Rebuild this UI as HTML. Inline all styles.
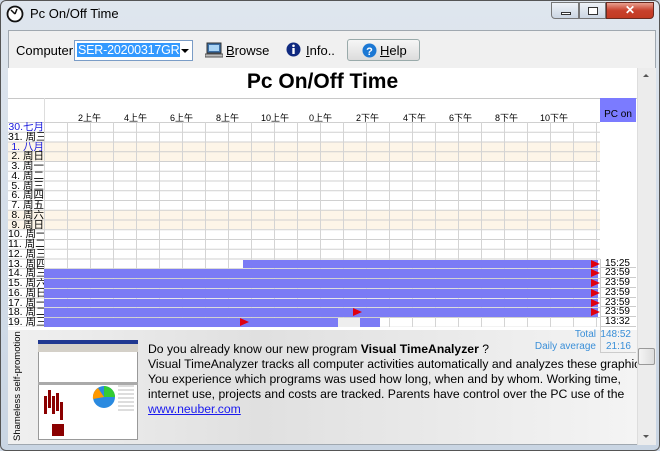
<!DOCTYPE html>
<html><head><meta charset="utf-8"><style>
*{margin:0;padding:0;box-sizing:border-box}
body{width:660px;height:451px;overflow:hidden;background:#cfd9e6;font-family:"Liberation Sans","Noto Sans CJK SC",sans-serif;position:relative}
.abs{position:absolute}
#frame{left:0;top:0;width:660px;height:451px;border:1px solid #555;border-radius:6px;background:linear-gradient(#dfe6ee,#c9d5e3)}
#title{left:30px;top:6px;font-size:13px;color:#000}
#client{left:8px;top:30px;width:648px;height:415px;background:#f0f0f0;border:1px solid #a0a8b0}
.btn{border:1px solid #9aa;border-radius:3px;background:linear-gradient(#f6f6f6,#dcdcdc);font-size:13px}
#chart{left:8px;top:68px;width:629px;height:262px;background:#fff}
.lbl{position:absolute;left:8px;width:36px;height:9.76px;font-size:10.5px;line-height:10px;text-align:right;overflow:hidden;white-space:nowrap;color:#000;font-family:"Liberation Sans","Noto Sans CJK SC",sans-serif}
.bar{position:absolute;height:8.8px;background:#7b7bf5}
.tri{position:absolute;width:0;height:0;border-top:4px solid transparent;border-bottom:4px solid transparent;border-left:9px solid #e00010}
.pc{position:absolute;left:600px;width:36px;height:9.76px;font-size:10px;line-height:10px;text-align:right;padding-right:6px;border-left:1px solid #ccc;border-bottom:1px solid #ccc;background:#fff}
.hr{position:absolute;top:111px;font-size:9px;color:#000;font-family:"Liberation Sans","Noto Sans CJK SC",sans-serif}
#ad{left:8px;top:330px;width:629px;height:114px;background:linear-gradient(90deg,#f0f0f0,#e0e0e0 40%,#f4f4f4)}
.t{position:absolute;left:148px;font-size:12.2px;white-space:nowrap;color:#000}
</style></head><body>
<div id="frame" class="abs"></div>
<svg class="abs" style="left:6px;top:5px" width="18" height="18"><circle cx="9" cy="9" r="7.5" fill="#fff" stroke="#111" stroke-width="1.8"/><path d="M9 9 L5 5 M9 9 L11 4" stroke="#111" stroke-width="1.5"/></svg>
<div id="title" class="abs">Pc On/Off Time</div>
<div class="abs" style="left:551px;top:2px;width:28px;height:17px;border:1px solid #777;border-radius:0 0 0 4px;background:linear-gradient(#eef2f7,#cbd5e2)"><div class="abs" style="left:9px;top:9px;width:10px;height:3px;border:1px solid #333;background:#fff"></div></div>
<div class="abs" style="left:579px;top:2px;width:27px;height:17px;border:1px solid #777;background:linear-gradient(#eef2f7,#cbd5e2)"><div class="abs" style="left:8px;top:4px;width:10px;height:8px;border:1px solid #333;background:#fff"></div></div>
<div class="abs" style="left:606px;top:2px;width:48px;height:17px;border:1px solid #6a2a20;border-radius:0 0 4px 0;background:linear-gradient(#e8a090,#c8402c 50%,#c23a22);color:#fff;font-size:12px;font-weight:bold;text-align:center;line-height:15px">✕</div>
<div id="client" class="abs"></div>
<div class="abs" style="left:16px;top:43px;font-size:13px">Computer</div>
<div class="abs" style="left:74px;top:40px;width:119px;height:21px;border:1px solid #7a9cc6;background:#fff"><span class="abs" style="left:2px;top:2px;background:#3399ff;color:#fff;font-size:12.5px;padding:0 1px;letter-spacing:-0.2px">SER-20200317GR</span><span class="abs" style="left:106px;top:8px;border-left:4px solid transparent;border-right:4px solid transparent;border-top:4px solid #000"></span></div>
<svg class="abs" style="left:205px;top:42px" width="18" height="16"><rect x="2" y="1" width="14" height="10" fill="#3a6ea5" stroke="#333"/><rect x="4" y="3" width="10" height="6" fill="#aad4f5"/><rect x="0" y="12" width="18" height="3" fill="#bbb" stroke="#555"/></svg>
<div class="abs" style="left:226px;top:43px;font-size:13px"><u>B</u>rowse</div>
<svg class="abs" style="left:286px;top:42px" width="15" height="15"><circle cx="7.5" cy="7.5" r="7" fill="#102a80"/><rect x="6.3" y="6" width="2.4" height="6" fill="#fff"/><circle cx="7.5" cy="3.8" r="1.3" fill="#fff"/></svg>
<div class="abs" style="left:306px;top:43px;font-size:13px"><u>I</u>nfo..</div>
<div class="abs btn" style="left:347px;top:39px;width:73px;height:22px"></div>
<svg class="abs" style="left:362px;top:43px" width="15" height="15"><circle cx="7.5" cy="7.5" r="7" fill="#1c78d4"/><text x="7.5" y="12" font-size="11" font-weight="bold" fill="#fff" text-anchor="middle" font-family="Liberation Sans">?</text></svg>
<div class="abs" style="left:380px;top:43px;font-size:13px"><u>H</u>elp</div>

<div id="chart" class="abs"></div>
<div class="abs" style="left:8px;top:70px;width:629px;text-align:center;font-size:21px;font-weight:bold">Pc On/Off Time</div>
<div class="abs" style="left:8px;top:98px;width:629px;height:1px;background:#c8c8c8"></div>
<div class="abs" style="left:44px;top:98px;width:1px;height:24px;background:#ddd"></div>
<div class="abs" style="left:600px;top:98px;width:36px;height:24px;background:#7b7bff;font-size:10px;text-align:center;line-height:34px">PC on</div>
<div class="hr" style="left:78px">2上午</div><div class="hr" style="left:124px">4上午</div><div class="hr" style="left:170px">6上午</div><div class="hr" style="left:216px">8上午</div><div class="hr" style="left:261px">10上午</div><div class="hr" style="left:309px">0上午</div><div class="hr" style="left:356px">2下午</div><div class="hr" style="left:403px">4下午</div><div class="hr" style="left:449px">6下午</div><div class="hr" style="left:495px">8下午</div><div class="hr" style="left:540px">10下午</div>

<div class="abs" style="left:8px;top:141.5px;width:592px;height:19.5px;background:#fdf5e8"></div>
<div class="abs" style="left:8px;top:209.8px;width:592px;height:19.5px;background:#fdf5e8"></div>
<div class="abs" style="left:44px;top:122px;width:556px;height:205px;background-image:linear-gradient(90deg,#d4d4d4 1px,transparent 1px),linear-gradient(#cfcfcf 1px,transparent 1px);background-size:23px 9.76px"></div>
<div class="abs" style="left:8px;top:122px;width:36px;height:205px;background-image:linear-gradient(#cfcfcf 1px,transparent 1px);background-size:36px 9.76px"></div>

<div class="lbl" style="top:122px;color:#1a1adf">30.七月</div>
<div class="lbl" style="top:131.8px">31. 周三</div>
<div class="lbl" style="top:141.5px;color:#1a1adf">1. 八月</div>
<div class="lbl" style="top:151.3px">2. 周日</div>
<div class="lbl" style="top:161px">3. 周一</div>
<div class="lbl" style="top:170.8px">4. 周二</div>
<div class="lbl" style="top:180.6px">5. 周三</div>
<div class="lbl" style="top:190.3px">6. 周四</div>
<div class="lbl" style="top:200.1px">7. 周五</div>
<div class="lbl" style="top:209.8px">8. 周六</div>
<div class="lbl" style="top:219.6px">9. 周日</div>
<div class="lbl" style="top:229.4px">10. 周一</div>
<div class="lbl" style="top:239.1px">11. 周二</div>
<div class="lbl" style="top:248.9px">12. 周三</div>
<div class="lbl" style="top:258.6px">13. 周四</div>
<div class="lbl" style="top:268.4px">14. 周三</div>
<div class="lbl" style="top:278.2px">15. 周六</div>
<div class="lbl" style="top:287.9px">16. 周日</div>
<div class="lbl" style="top:297.7px">17. 周一</div>
<div class="lbl" style="top:307.4px">18. 周二</div>
<div class="lbl" style="top:317.2px">19. 周三</div>

<div class="bar" style="left:243px;width:355px;top:259.6px"></div>
<div class="bar" style="left:44px;width:554px;top:269.4px"></div>
<div class="bar" style="left:44px;width:554px;top:279.2px"></div>
<div class="bar" style="left:44px;width:554px;top:288.9px"></div>
<div class="bar" style="left:44px;width:554px;top:298.7px"></div>
<div class="bar" style="left:44px;width:554px;top:308.4px"></div>
<div class="bar" style="left:44px;width:294px;top:318.2px"></div>
<div class="bar" style="left:360px;width:20px;top:318.2px"></div>
<div class="abs" style="left:338px;top:318.2px;width:22px;height:8.8px;background:#eee"></div>
<div class="tri" style="left:591px;top:259.6px"></div>
<div class="tri" style="left:591px;top:269.4px"></div>
<div class="tri" style="left:591px;top:279.2px"></div>
<div class="tri" style="left:591px;top:288.9px"></div>
<div class="tri" style="left:591px;top:298.7px"></div>
<div class="tri" style="left:591px;top:308.4px"></div>
<div class="tri" style="left:353px;top:308.4px"></div>
<div class="tri" style="left:240px;top:318.2px"></div>

<div class="pc" style="top:258.6px">15:25</div>
<div class="pc" style="top:268.4px">23:59</div>
<div class="pc" style="top:278.2px">23:59</div>
<div class="pc" style="top:287.9px">23:59</div>
<div class="pc" style="top:297.7px">23:59</div>
<div class="pc" style="top:307.4px">23:59</div>
<div class="pc" style="top:317.2px">13:32</div>

<div id="ad" class="abs"></div>
<div class="abs" style="left:600px;top:327px;width:36px;height:26px;border-left:1px solid #ccc;border-bottom:1px solid #ccc"></div>
<div class="abs" style="left:520px;top:329px;width:76px;text-align:right;font-size:10px;color:#3a8fd8">Total</div>
<div class="abs" style="left:600px;top:329px;width:31px;text-align:right;font-size:10px;color:#3a8fd8">148:52</div>
<div class="abs" style="left:500px;top:341px;width:96px;text-align:right;font-size:10px;color:#3a8fd8">Daily average</div>
<div class="abs" style="left:600px;top:341px;width:31px;text-align:right;font-size:10px;color:#3a8fd8">21:16</div>

<div class="abs" style="left:12px;top:441px;width:20px;font-size:9.5px;white-space:nowrap;transform:rotate(-90deg);transform-origin:0 0">Shameless self-promotion</div>
<div class="abs" style="left:38px;top:340px;width:100px;height:100px;background:#fff;border:1px solid #999"></div>
<div class="abs" style="left:38px;top:340px;width:100px;height:4px;background:#203890"></div>
<div class="abs" style="left:38px;top:344px;width:100px;height:8px;background:#d4d0c8"></div>
<div class="abs" style="left:38px;top:382px;width:100px;height:3px;background:#aaa"></div>
<div class="abs" style="left:44px;top:396px;width:3px;height:18px;background:#8b0000;box-shadow:4px -6px 0 #8b0000,8px 0 0 #8b0000,12px -3px 0 #8b0000,16px 6px 0 #8b0000"></div>
<div class="abs" style="left:52px;top:424px;width:12px;height:12px;background:#8b0000"></div>
<svg class="abs" style="left:92px;top:385px" width="24" height="24"><circle cx="12" cy="12" r="11" fill="#2a8ae0"/><path d="M12 12 L12 1 A11 11 0 0 1 23 12 Z" fill="#3c3"/><path d="M12 12 L1 14 A11 11 0 0 1 6 3 Z" fill="#f90"/></svg>
<div class="abs" style="left:118px;top:385px;width:16px;height:26px;background:repeating-linear-gradient(#ddd 0 2px,#fff 2px 4px)"></div>

<div class="t" style="top:342px">Do you already know our new program <b>Visual TimeAnalyzer</b> ?</div>
<div class="t" style="top:357px">Visual TimeAnalyzer tracks all computer activities automatically and analyzes these graphic</div>
<div class="t" style="top:372px">You experience which programs was used how long, when and by whom. Working time,</div>
<div class="t" style="top:387px">internet use, projects and costs are tracked. Parents have control over the PC use of the</div>
<div class="t" style="top:402px;color:#1a1aee;text-decoration:underline">www.neuber.com</div>

<div class="abs" style="left:637px;top:68px;width:19px;height:377px;background:#ececec;border-left:1px solid #ddd"></div>
<div class="abs" style="left:643px;top:74px;border-left:3px solid transparent;border-right:3px solid transparent;border-bottom:3px solid #555"></div>
<div class="abs" style="left:643px;top:435px;border-left:3px solid transparent;border-right:3px solid transparent;border-top:3px solid #555"></div>
<div class="abs" style="left:638px;top:348px;width:17px;height:17px;border:1px solid #999;border-radius:2px;background:linear-gradient(90deg,#f4f4f4,#ddd)"></div>
</body></html>
